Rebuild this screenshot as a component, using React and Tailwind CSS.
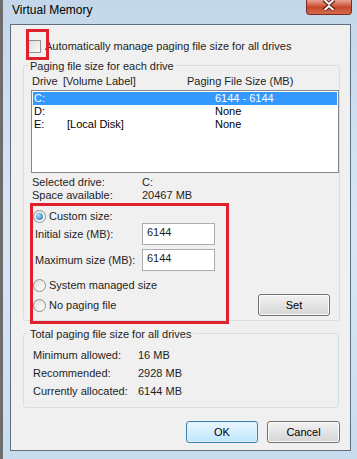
import React from 'react';

const font = { fontFamily: '"Liberation Sans", Arial, sans-serif' };

const Radio = ({ checked }) => (
  <span className="inline-flex items-center justify-center w-[13px] h-[13px] rounded-full border border-[#8f8f8f] bg-gradient-to-br from-[#dedede] to-[#ffffff] shrink-0">
    {checked && <span className="w-[7px] h-[7px] rounded-full bg-[radial-gradient(circle_at_35%_35%,#a8e4ff,#1a63a3)]" />}
  </span>
);

const Button = ({ children, focus, className = '' }) => (
  <div
    className={`flex items-center justify-center h-[22px] rounded-[3px] border text-[11px] text-black ${
      focus
        ? 'border-[#3c7fb1] bg-gradient-to-b from-[#eaf6fd] to-[#bee6fd] shadow-[inset_0_0_0_1px_#e0f2fc]'
        : 'border-[#707070] bg-gradient-to-b from-[#f2f2f2] to-[#d5d5d5] shadow-[inset_0_0_0_1px_#fcfcfc]'
    } ${className}`}
  >
    {children}
  </div>
);

const drives = [
  { drive: 'C:', label: '', size: '6144 - 6144', selected: true },
  { drive: 'D:', label: '', size: 'None' },
  { drive: 'E:', label: '[Local Disk]', size: 'None' },
];

export default function App() {
  return (
    <div
      className="relative w-[357px] h-[459px] overflow-hidden bg-gradient-to-b from-[#c4d7ea] via-[#d9e7f4] to-[#c9dcee] border-l-[3px] border-[#6d6d6d] text-[11px] text-[#1e1e1e] whitespace-nowrap"
      style={font}
    >
      {/* title bar */}
      <div className="flex items-start h-[24px]">
        <span className="pl-[9px] pt-[3px] text-[12px] leading-[14px] text-black">Virtual Memory</span>
        <div className="ml-auto mr-[5px] w-[46px] h-[15px] rounded-b-[4px] border border-t-0 border-[#7b2a1d] bg-gradient-to-b from-[#e8a392] via-[#c8472c] to-[#d06a4c] flex items-start justify-center">
          <svg width="14" height="11" viewBox="0 0 14 11">
            <path d="M2 0 L7 4 L12 0 M2 10 L7 6 L12 10" stroke="#5a1a10" strokeWidth="4" fill="none" />
            <path d="M2.5 0 L7 4 L11.5 0 M2.5 10 L7 6 L11.5 10" stroke="#ffffff" strokeWidth="2" fill="none" />
          </svg>
        </div>
      </div>

      {/* client area */}
      <div className="ml-[7px] mr-[6px] h-[427px] border border-[#5f6f80] bg-[#f0f0f0] flex flex-col">
        <div className="flex items-center gap-[4px] pl-[17px] pt-[13px] h-[29px]">
          <span className="w-[13px] h-[13px] border border-[#8e8f8f] bg-gradient-to-br from-[#dcdcdc] to-[#fafafa]" />
          <span>Automatically manage paging file size for all drives</span>
        </div>

        {/* group 1 */}
        <div className="relative ml-[12px] mr-[10px] mt-[11px] border border-[#d5dfe5] rounded-[3px] pl-[7px] pt-[7px] pb-[4px]">
          <span className="absolute -top-[8px] left-[4px] px-[2px] bg-[#f0f0f0] leading-[16px]">Paging file size for each drive</span>
          <div className="flex h-[16px] items-center pl-[1px]">
            <span className="w-[31px]">Drive</span>
            <span className="w-[124px]">[Volume Label]</span>
            <span>Paging File Size (MB)</span>
          </div>
          <div className="mt-[1px] h-[83px] border border-[#828790] bg-white pt-[1px] px-[1px] leading-[13px]">
            {drives.map((d) => (
              <div
                key={d.drive}
                className={`flex h-[13px] ${d.selected ? 'bg-[#3399ff] text-white' : 'text-black'}`}
              >
                <span className="w-[34px] pl-[1px]">{d.drive}</span>
                <span className="w-[148px]">{d.label}</span>
                <span>{d.size}</span>
              </div>
            ))}
          </div>
          <div className="flex flex-col mt-[3px] leading-[13px] pl-[1px]">
            <div className="flex"><span className="w-[110px]">Selected drive:</span><span>C:</span></div>
            <div className="flex"><span className="w-[110px]">Space available:</span><span>20467 MB</span></div>
          </div>

          <div className="flex items-end mt-[7px]">
            <div className="flex flex-col w-[190px] pl-[2px] pb-[3px]">
              <div className="flex items-center gap-[3px] h-[14px]">
                <Radio checked />
                <span>Custom size:</span>
              </div>
              <div className="flex items-center h-[22px]">
                <span className="w-[109px] pl-[2px]">Initial size (MB):</span>
                <div className="w-[73px] h-[22px] border border-[#abadb3] bg-white pl-[4px] leading-[16px]">6144</div>
              </div>
              <div className="flex items-center h-[22px] mt-[4px]">
                <span className="w-[109px] pl-[2px]">Maximum size (MB):</span>
                <div className="w-[73px] h-[22px] border border-[#abadb3] bg-white pl-[4px] leading-[16px]">6144</div>
              </div>
              <div className="flex items-center gap-[3px] h-[16px] mt-[6px]">
                <Radio />
                <span>System managed size</span>
              </div>
              <div className="flex items-center gap-[3px] h-[16px] mt-[4px]">
                <Radio />
                <span>No paging file</span>
              </div>
            </div>
            <Button className="ml-auto mr-[9px] w-[72px]">Set</Button>
          </div>
        </div>

        {/* group 2 */}
        <div className="relative ml-[12px] mr-[11px] mt-[12px] border border-[#d5dfe5] rounded-[3px] pl-[9px] pt-[12px] pb-[7px]">
          <span className="absolute -top-[8px] left-[4px] px-[2px] bg-[#f0f0f0] leading-[16px]">Total paging file size for all drives</span>
          <div className="flex h-[18px] items-center"><span className="w-[105px]">Minimum allowed:</span><span>16 MB</span></div>
          <div className="flex h-[18px] items-center"><span className="w-[105px]">Recommended:</span><span>2928 MB</span></div>
          <div className="flex h-[18px] items-center"><span className="w-[105px]">Currently allocated:</span><span>6144 MB</span></div>
        </div>

        <div className="flex justify-end gap-[9px] mr-[10px] mt-[13px]">
          <Button focus className="w-[72px]">OK</Button>
          <Button className="w-[73px]">Cancel</Button>
        </div>
      </div>

      {/* red annotation boxes */}
      <div className="absolute left-[23px] top-[29px] w-[23px] h-[31px] border-[3px] border-[#e0202c] pointer-events-none" />
      <div className="absolute left-[27px] top-[203px] w-[199px] h-[121px] border-[3px] border-[#e0202c] pointer-events-none" />
    </div>
  );
}
